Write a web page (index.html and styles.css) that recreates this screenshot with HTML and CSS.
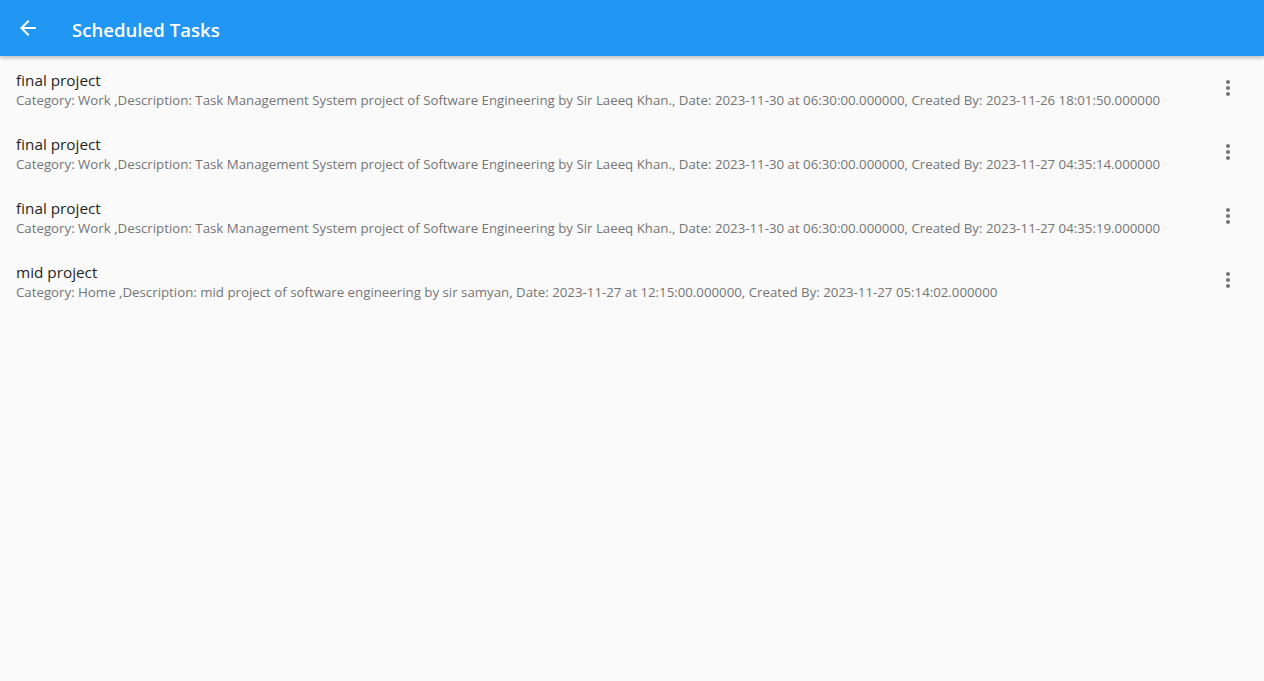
FILE: index.html
```html
<!DOCTYPE html>
<html>
<head>
<meta charset="utf-8">
<link rel="stylesheet" href="styles.css">
</head>
<body>
<header class="appbar">
  <button class="back" aria-label="Back">
    <svg width="24" height="24" viewBox="0 0 24 24"><path fill="#fff" d="M20 11H7.83l5.59-5.59L12 4l-8 8 8 8 1.41-1.41L7.83 13H20v-2z"/></svg>
  </button>
  <h1 class="title">Scheduled Tasks</h1>
</header>
<main class="list">
  <div class="tile">
    <div class="text">
      <div class="t-title">final project</div>
      <div class="t-sub">Category: Work ,Description: Task Management System project of Software Engineering by Sir Laeeq Khan., Date: 2023-11-30 at 06:30:00.000000, Created By: 2023-11-26 18:01:50.000000</div>
    </div>
    <div class="more"><svg width="24" height="24" viewBox="0 0 24 24"><path fill="#757575" d="M12 8c1.1 0 2-.9 2-2s-.9-2-2-2-2 .9-2 2 .9 2 2 2zm0 2c-1.1 0-2 .9-2 2s.9 2 2 2 2-.9 2-2-.9-2-2-2zm0 6c-1.1 0-2 .9-2 2s.9 2 2 2 2-.9 2-2-.9-2-2-2z"/></svg></div>
  </div>
  <div class="tile">
    <div class="text">
      <div class="t-title">final project</div>
      <div class="t-sub">Category: Work ,Description: Task Management System project of Software Engineering by Sir Laeeq Khan., Date: 2023-11-30 at 06:30:00.000000, Created By: 2023-11-27 04:35:14.000000</div>
    </div>
    <div class="more"><svg width="24" height="24" viewBox="0 0 24 24"><path fill="#757575" d="M12 8c1.1 0 2-.9 2-2s-.9-2-2-2-2 .9-2 2 .9 2 2 2zm0 2c-1.1 0-2 .9-2 2s.9 2 2 2 2-.9 2-2-.9-2-2-2zm0 6c-1.1 0-2 .9-2 2s.9 2 2 2 2-.9 2-2-.9-2-2-2z"/></svg></div>
  </div>
  <div class="tile">
    <div class="text">
      <div class="t-title">final project</div>
      <div class="t-sub">Category: Work ,Description: Task Management System project of Software Engineering by Sir Laeeq Khan., Date: 2023-11-30 at 06:30:00.000000, Created By: 2023-11-27 04:35:19.000000</div>
    </div>
    <div class="more"><svg width="24" height="24" viewBox="0 0 24 24"><path fill="#757575" d="M12 8c1.1 0 2-.9 2-2s-.9-2-2-2-2 .9-2 2 .9 2 2 2zm0 2c-1.1 0-2 .9-2 2s.9 2 2 2 2-.9 2-2-.9-2-2-2zm0 6c-1.1 0-2 .9-2 2s.9 2 2 2 2-.9 2-2-.9-2-2-2z"/></svg></div>
  </div>
  <div class="tile">
    <div class="text">
      <div class="t-title">mid project</div>
      <div class="t-sub">Category: Home ,Description: mid project of software engineering by sir samyan, Date: 2023-11-27 at 12:15:00.000000, Created By: 2023-11-27 05:14:02.000000</div>
    </div>
    <div class="more"><svg width="24" height="24" viewBox="0 0 24 24"><path fill="#757575" d="M12 8c1.1 0 2-.9 2-2s-.9-2-2-2-2 .9-2 2 .9 2 2 2zm0 2c-1.1 0-2 .9-2 2s.9 2 2 2 2-.9 2-2-.9-2-2-2zm0 6c-1.1 0-2 .9-2 2s.9 2 2 2 2-.9 2-2-.9-2-2-2z"/></svg></div>
  </div>
</main>
</body>
</html>
```

FILE: styles.css
```css
html, body {
  margin: 0;
  padding: 0;
  background: #fafafa;
  font-family: "Open Sans", "Noto Sans", sans-serif;
  height: 100%;
}
.appbar {
  height: 56px;
  background: #2196f3;
  display: flex;
  align-items: center;
  box-shadow: 0 2px 4px rgba(0,0,0,0.25);
  position: relative;
}
.back {
  width: 56px;
  height: 56px;
  border: 0;
  background: none;
  display: flex;
  align-items: center;
  justify-content: center;
  padding: 0;
}
.title {
  margin: 0 0 0 16px;
  padding-top: 3px;
  color: #fff;
  font-size: 18.6px;
  font-weight: 600;
}
.list {
  display: flex;
  flex-direction: column;
}
.tile {
  height: 64px;
  box-sizing: border-box;
  display: flex;
  align-items: center;
  padding: 0 16px;
}
.text {
  flex: 1;
  min-width: 0;
  padding-top: 4px;
}
.t-title {
  font-size: 15.3px;
  line-height: 21px;
  color: #1f1f1f;
}
.t-sub {
  font-size: 13.27px;
  line-height: 19px;
  color: #757575;
  white-space: nowrap;
}
.more {
  width: 24px;
  height: 24px;
  margin-right: 8px;
}
```
